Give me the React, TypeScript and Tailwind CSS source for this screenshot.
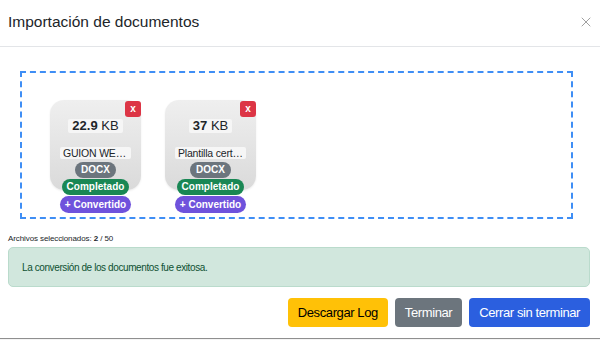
import { X } from 'lucide-react';

type Doc = { size: string; unit: string; name: string };

const docs: Doc[] = [
  { size: '22.9', unit: 'KB', name: 'GUION WEB FINAL.docx' },
  { size: '37', unit: 'KB', name: 'Plantilla certificado.docx' },
];

function DocCard({ doc }: { doc: Doc }) {
  return (
    <div className="relative w-[91px] h-[90px] rounded-[14px] bg-gradient-to-b from-[#efefef] to-[#dadada] shadow-[0_1px_2px_rgba(0,0,0,0.08)]">
      <button className="absolute top-[1px] right-0 w-4 h-4 rounded-[3px] bg-[#dc3545] text-white text-[10px] font-bold leading-4 flex items-center justify-center">
        x
      </button>
      <div className="flex flex-col items-center pt-[19px]">
        <div className="h-[14px] px-1 bg-[#f6f6f6] rounded-[2px] text-[13px] leading-[14px] text-[#212529]">
          <span className="font-bold">{doc.size}</span> {doc.unit}
        </div>
        <div className="mt-[14px] h-[12px] w-[71px] px-[3px] bg-[#f6f6f6] rounded-[2px] text-[10.5px] tracking-[-0.2px] leading-[12px] text-[#212529] truncate">
          {doc.name}
        </div>
        <div className="mt-[3px] h-4 w-[41px] rounded-full bg-[#6c757d] text-white text-[10px] font-bold leading-4 text-center">
          DOCX
        </div>
        <div className="mt-[1px] h-4 w-[67px] rounded-full bg-[#198754] text-white text-[10px] font-bold leading-4 text-center">
          Completado
        </div>
        <div className="mt-[1px] h-[17px] w-[71px] rounded-full bg-[#6f52dc] text-white text-[10px] font-bold leading-[17px] text-center">
          + Convertido
        </div>
      </div>
    </div>
  );
}

export default function App() {
  return (
    <div className="w-[600px] h-[340px] overflow-hidden bg-white font-['Liberation_Sans',Arial,sans-serif] text-[#212529]">
      <div className="h-[338px] flex flex-col">
        {/* Header */}
        <div className="h-[47px] flex items-center justify-between pl-2 pr-[6px] pb-[3px] border-b border-[#e3e5e8]">
          <h5 className="text-[15.5px] leading-5">Importación de documentos</h5>
          <X className="w-[16px] h-[16px] text-[#8d8d8d]" strokeWidth={1.25} />
        </div>

        {/* Body */}
        <div className="pl-2 pr-[10px]">
          <div className="mt-[24px] ml-3 mr-[17px] h-[148px] border-2 border-dashed border-[#3f8ef5] pt-[27px] pl-[28px] flex gap-6">
            {docs.map((d) => (
              <DocCard key={d.name} doc={d} />
            ))}
          </div>

          <p className="mt-[14px] text-[8px] tracking-[-0.1px] leading-[11px]">
            Archivos seleccionados: <span className="font-bold">2</span> / 50
          </p>

          <div className="mt-[3px] h-[40px] flex items-center px-[13px] rounded-[5px] bg-[#d1e7dd] border border-[#badbcc] text-[#0f5132] text-[10px] tracking-[-0.4px]">
            La conversión de los documentos fue exitosa.
          </div>

          <div className="mt-[11px] flex justify-end gap-[7px]">
            <button className="h-[29px] px-[10px] rounded-[4px] bg-[#ffc107] text-[#000] text-[13px] tracking-[-0.4px]">
              Descargar Log
            </button>
            <button className="h-[29px] px-[10px] rounded-[4px] bg-[#6c757d] text-white text-[13px] tracking-[-0.4px]">
              Terminar
            </button>
            <button className="h-[29px] px-[10px] rounded-[4px] bg-[#2b5fdf] text-white text-[13px] tracking-[-0.4px]">
              Cerrar sin terminar
            </button>
          </div>
        </div>
      </div>
      <div className="border-t border-[#8f8f8f] h-[2px] bg-[#f4f4f4]" />
    </div>
  );
}
